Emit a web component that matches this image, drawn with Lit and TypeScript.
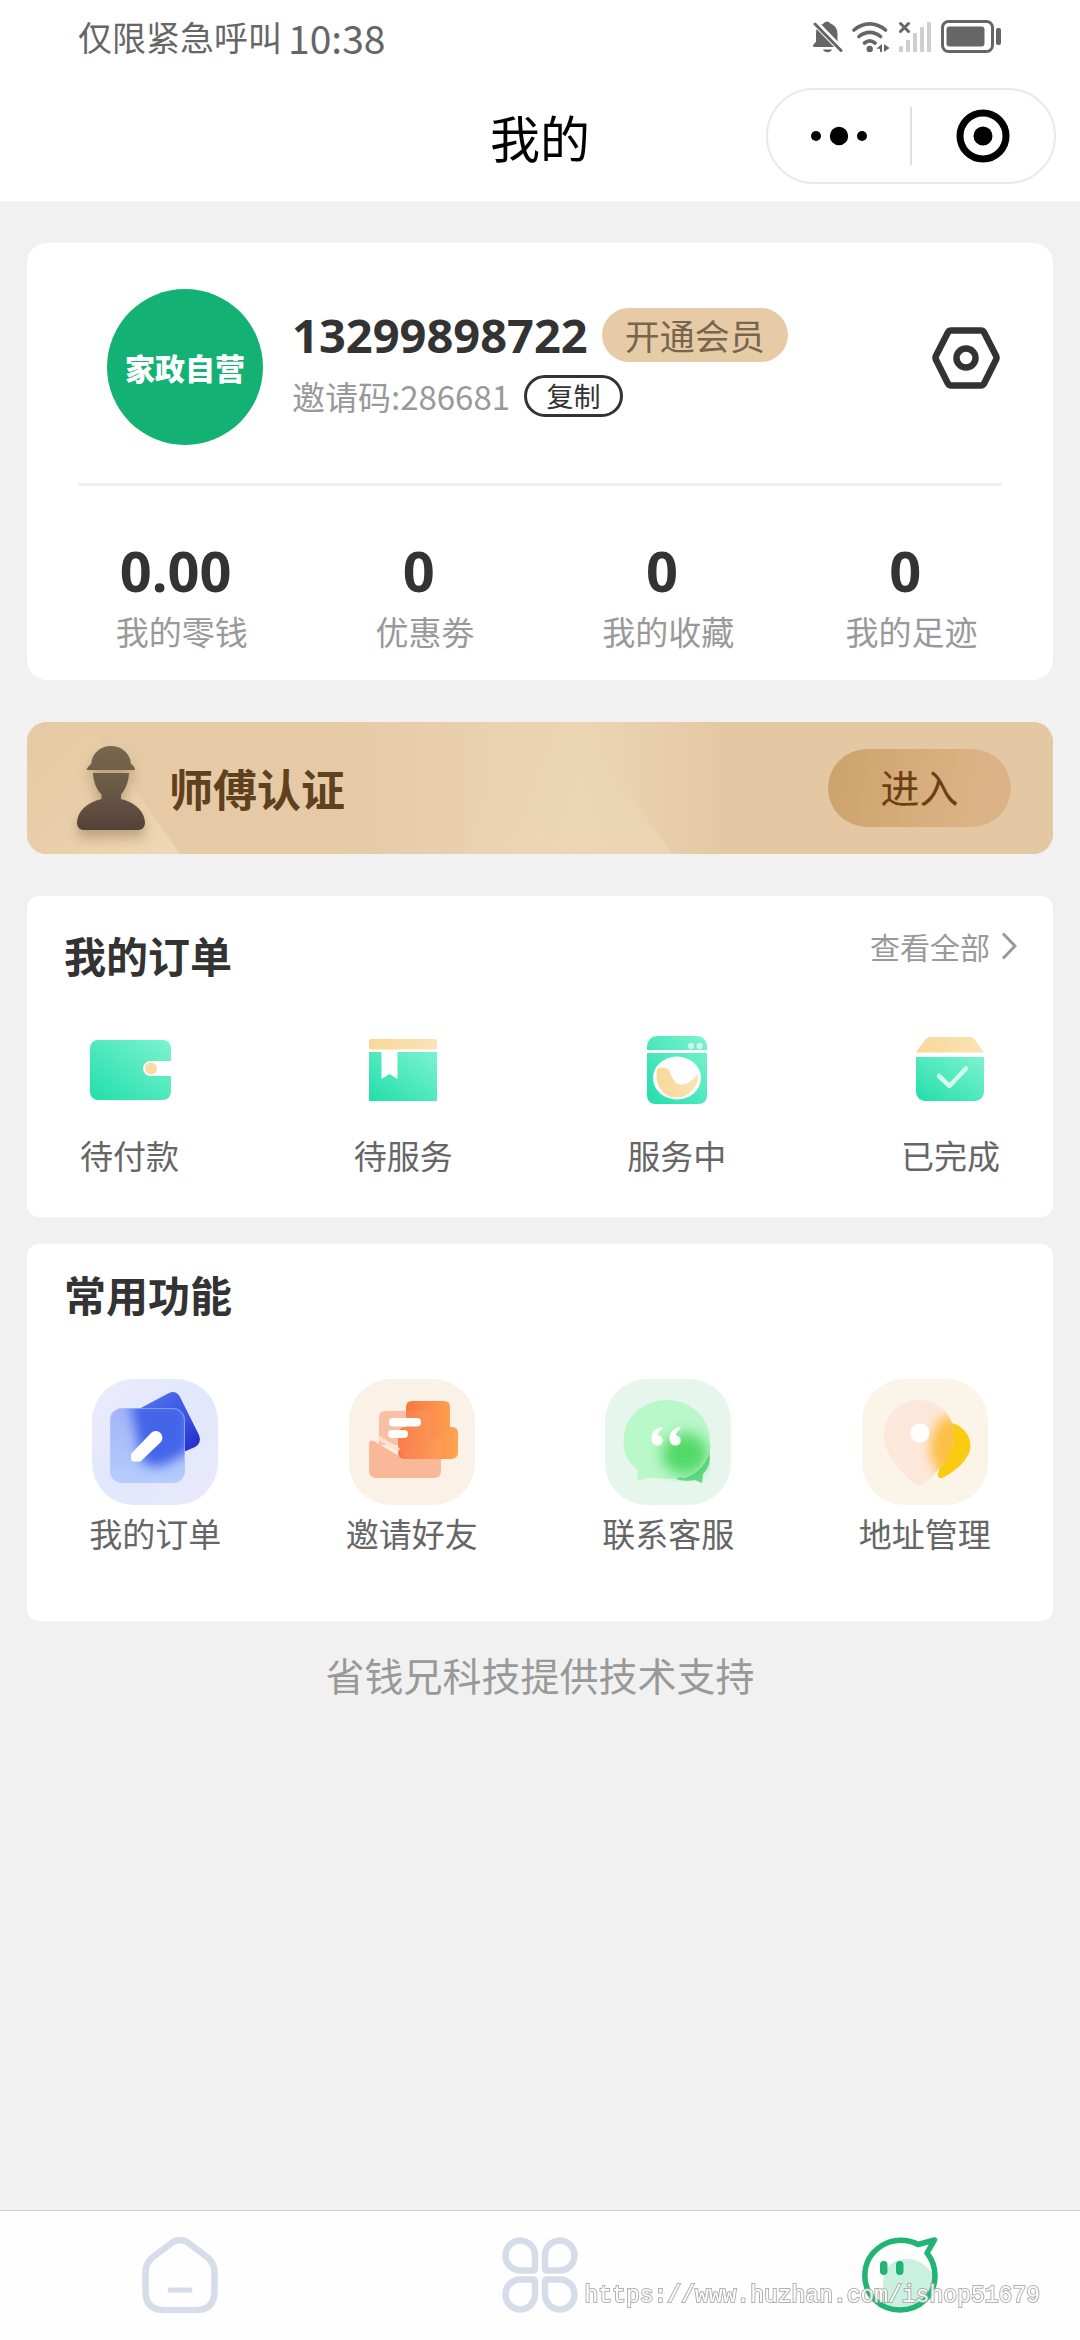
import { LitElement, html, css, svg } from "lit";
import { customElement } from "lit/decorators.js";

const bellIcon = html`<svg width="30" height="32" viewBox="0 0 30 32" aria-hidden="true">
  <path fill="#666" d="M14 .8c1.700 0 2.800.6 3.400 1.600C22 4 24.500 8 24.500 13v7l2.500 3.500V26H.5v-2.200L3 21V13c0-5 3.200-9 7.600-10.600C11.200 1.400 12.300.8 14 .8zM10 28.500h9c-.6 1.800-2.300 2.800-4.500 2.800s-3.900-1-4.500-2.800z"/>
  <path stroke="#fff" stroke-width="7" d="M0 0l30 31"/>
  <path fill="#666" d="M3.500 8L21 26H.5v-2.200L3 21z"/>
  <path stroke="#666" stroke-width="3" stroke-linecap="round" d="M2 3l26 26.500"/>
</svg>`;

const wifiIcon = html`<svg width="38" height="32" viewBox="0 0 38 32" fill="none" stroke="#666" stroke-width="3.600" stroke-linecap="round" aria-hidden="true">
  <path d="M2 9c9.500-8.200 22-8.200 31.500 0M7 15.500c6.500-5.500 15-5.500 21.500 0M12.500 22c3.200-2.600 7.300-2.600 10.500 0"/>
  <circle cx="17.700" cy="28" r="3.200" fill="#666" stroke="none"/>
  <path fill="#666" stroke="none" d="M30 23v8h-2v-3l-3.500-.5zM32 23l5.500 4-5.500 4z"/>
</svg>`;

const signalIcon = html`<svg width="33" height="32" viewBox="0 0 33 32" aria-hidden="true">
  <path stroke="#666" stroke-width="3" stroke-linecap="round" d="M1.500 2.500l8 8M9.500 2.500l-8 8"/>
  <g fill="#cfcfcf"><rect y="25" width="4" height="6" rx="1"/><rect x="7" y="19" width="4" height="12" rx="1"/><rect x="14" y="12" width="4" height="19" rx="1"/><rect x="21" y="6" width="4" height="25" rx="1"/><rect x="28" y="1" width="4" height="30" rx="1"/></g>
</svg>`;

const batteryIcon = html`<svg width="61" height="34" viewBox="0 0 61 34" aria-hidden="true">
  <rect x="1.500" y="1.500" width="50" height="30" rx="6" fill="none" stroke="#666" stroke-width="3"/>
  <rect x="5.500" y="6.500" width="38" height="20" rx="3" fill="#666"/>
  <rect x="55" y="8" width="5" height="17" rx="2" fill="#666"/>
</svg>`;

const moreIcon = html`<svg width="58" height="20" viewBox="0 0 58 20" aria-hidden="true">
  <circle cx="6" cy="10" r="5"/><circle cx="29" cy="10" r="9.200"/><circle cx="52" cy="10" r="5"/>
</svg>`;

const targetIcon = html`<svg width="54" height="54" viewBox="0 0 54 54" aria-hidden="true">
  <circle cx="27" cy="27" r="23" fill="none" stroke="#000" stroke-width="7"/><circle cx="27" cy="27" r="9.500"/>
</svg>`;

const settingsIcon = html`<svg width="68" height="62" viewBox="0 0 68 62" fill="none" stroke="#333" stroke-width="6.500" stroke-linejoin="round" aria-hidden="true">
  <path d="M19 3.500h30q2 0 3 1.800l12 23.500q1 2 0 4L52 56.700q-1 1.800-3 1.800H19q-2 0-3-1.800L4 32.800q-1-2 0-4L16 5.300q1-1.800 3-1.800z"/>
  <circle cx="34" cy="31" r="9.500"/>
</svg>`;

const workerIcon = html`<svg class="worker" width="68" height="84" viewBox="0 0 68 84" aria-hidden="true">
  <defs><linearGradient id="wk" x1="0" y1="0" x2="0" y2="1"><stop offset="0" stop-color="#78674f"/><stop offset=".55" stop-color="#695745"/><stop offset="1" stop-color="#56413a"/></linearGradient></defs>
  <path fill="url(#wk)" d="M9.500 24c1-3 2.500-4.500 4.700-6C15 7 23.500 0 34 0s19 7 20 18c2.200 1 3.500 3 4 6zM16 27h36c-.5 9-3 15.500-8 21.500v4.500c14 3.500 23.500 12 24 23.500 0 5-3 7.500-7 7.500H7c-4 0-7-2.500-7-7.500C.5 65 10 56.500 24.500 53v-4.500C19 42.500 16.500 36 16 27z"/>
</svg>`;

const bannerArt = html`<svg class="banner-art" viewBox="0 0 1026 132" preserveAspectRatio="none" aria-hidden="true">
  <defs>
    <linearGradient id="b0"><stop offset="0" stop-color="#e6caa6"/><stop offset=".3" stop-color="#e6caa6"/><stop offset=".54" stop-color="#ecd5b4"/><stop offset=".68" stop-color="#e4c8a3"/><stop offset="1" stop-color="#e4c8a3"/></linearGradient>
    <linearGradient id="b1" x1="0" y1="0" x2="1" y2="1"><stop offset="0" stop-color="#e5c9a0" stop-opacity=".4"/><stop offset="1" stop-color="#efd9b4"/></linearGradient>
    <linearGradient id="b2" x1="0" y1="0" x2="1" y2="1"><stop offset=".3" stop-color="#eed8b8" stop-opacity="0"/><stop offset="1" stop-color="#eed8b8" stop-opacity=".7"/></linearGradient>
  </defs>
  <rect width="1026" height="132" fill="url(#b0)"/>
  <path fill="url(#b1)" d="M0 0h60l93 132H0z"/>
  <path fill="url(#b2)" d="M440 0h112l93 132H440z"/>
</svg>`;

const chevronIcon = html`<svg width="16" height="28" viewBox="0 0 16 28" fill="none" stroke="#999" stroke-width="3" aria-hidden="true"><path d="M2 1.500L14 14 2 26.500"/></svg>`;

const mint = (id: string) => svg`<linearGradient id=${id} x1="0" y1="1" x2="1" y2="0"><stop offset="0" stop-color="#22deaa"/><stop offset="1" stop-color="#7df3d0"/></linearGradient>`;
const sand = (id: string) => svg`<linearGradient id=${id} x1="0" y1="0" x2="1" y2="0"><stop offset="0" stop-color="#f8d898"/><stop offset="1" stop-color="#fae3b6"/></linearGradient>`;

const orderItems = [
  {
    label: "待付款",
    art: svg`<defs>${mint("o1")}</defs>
      <path fill="url(#o1)" d="M16 18h65a8 8 0 0 1 8 8v13H68.500a7.500 7.500 0 0 0 0 15H89v16a8 8 0 0 1-8 8H16a8 8 0 0 1-8-8V26a8 8 0 0 1 8-8z"/>
      <circle cx="69" cy="46.500" r="6" fill="#fbdba4"/>`,
  },
  {
    label: "待服务",
    art: svg`<defs>${mint("o2")}${sand("s2")}</defs>
      <rect x="14" y="17" width="68" height="10.500" rx="2" fill="url(#s2)"/>
      <path fill="url(#o2)" d="M14 30h12.500v27l8-5 8 5V30H82v49H14z"/>`,
  },
  {
    label: "服务中",
    art: svg`<defs>${mint("o3")}${sand("s3")}</defs>
      <path fill="url(#o3)" d="M28 14h40a10 10 0 0 1 10 10v4H18v-4a10 10 0 0 1 10-10zM18 31h60v43a8 8 0 0 1-8 8H26a8 8 0 0 1-8-8z"/>
      <circle cx="62" cy="24" r="3" fill="#d5faec"/><circle cx="70.500" cy="24" r="3" fill="#d5faec"/>
      <ellipse cx="48" cy="56" rx="24" ry="21.500" fill="#fff"/>
      <path fill="url(#s3)" d="M28 47c4-2 9-2 12 1 2 5 4 11 9 14 8 2 14-3 20-10 1 12-8 23-21 23.500S25 64 28 47z"/>`,
  },
  {
    label: "已完成",
    art: svg`<defs>${mint("o4")}${sand("s4")}</defs>
      <path fill="url(#s4)" d="M28 15h40q3 0 5 3l9 12.500H14L23 18q2-3 5-3z"/>
      <path fill="url(#o4)" d="M14 35h68v35a9 9 0 0 1-9 9H23a9 9 0 0 1-9-9z"/>
      <path fill="none" stroke="#d3faec" stroke-width="4.500" stroke-linecap="round" stroke-linejoin="round" d="M37 54l10.500 10L64 46.500"/>`,
  },
];

const toolItems = [
  {
    label: "我的订单",
    art: svg`<defs>
        <linearGradient id="t1a" x1="0" y1="0" x2="1" y2="1"><stop offset="0" stop-color="#ecebfa"/><stop offset=".5" stop-color="#e1e7fd"/><stop offset="1" stop-color="#ebe9fb"/></linearGradient>
        <linearGradient id="t1b" x1="0" y1="0" x2="1" y2="1"><stop offset="0" stop-color="#5578f2"/><stop offset=".6" stop-color="#3a52e0"/><stop offset="1" stop-color="#1d1fc0"/></linearGradient>
        <linearGradient id="t1c" x1="0" y1="0" x2="0" y2="1"><stop offset="0" stop-color="#a2b4f8"/><stop offset="1" stop-color="#b5cdfc"/></linearGradient>
        <clipPath id="t1d"><rect x="18" y="29" width="75" height="75" rx="12"/></clipPath>
        <filter id="t1e" x="-50%" y="-50%" width="200%" height="200%"><feGaussianBlur stdDeviation="6"/></filter>
      </defs>
      <rect width="126" height="126" rx="42" fill="url(#t1a)"/>
      <path fill="url(#t1b)" d="M45 31l32-17q7-3 11 4l19 38q3 8-4 12L80 78 50 70z"/>
      <rect x="18" y="29" width="75" height="75" rx="12" fill="url(#t1c)"/>
      <g clip-path="url(#t1d)"><path filter="url(#t1e)" fill="#4265ea" d="M38 22h60v50L68 88 50 84z"/></g>
      <rect x="18.500" y="29.500" width="74" height="74" rx="12" fill="none" stroke="#b9c9ff" stroke-opacity=".5"/>
      <path fill="#fff" d="M39 75l20-21a6.500 6.500 0 0 1 9.500 9.500L50 81q-1 1.500-3 1.500h-5q-3 0-3-3z"/>`,
  },
  {
    label: "邀请好友",
    art: svg`<defs><linearGradient id="t2" x1="0" y1="0" x2="1" y2="0"><stop offset="0" stop-color="#f8713c"/><stop offset="1" stop-color="#ffa553"/></linearGradient></defs>
      <rect width="126" height="126" rx="42" fill="#faf1e7"/>
      <path fill="#fac0a4" d="M36 32h41q6 0 6 6v28H30V38q0-6 6-6z"/>
      <path fill="#f9b898" d="M20 65q0-5 5-3l25 15 32-17q10-4 10 4v28q0 7-7 7H27q-7 0-7-7z"/>
      <path fill="url(#t2)" d="M63 22h32q6 0 6 6v20h2q6 0 6 6v19q0 7-7 7H56q-7 0-7-7V55q0-7 8-7V28q0-6 6-6z"/>
      <path fill="#ffb78e" fill-opacity=".18" d="M57 32h20q6 0 6 6v22l9-1v21H56l-7-7V55q0-7 8-7z"/>
      <path fill="none" stroke="#fb8d5a" stroke-width="2" d="M56 76l28-16M77 32q6 0 6 7v20"/>
      <path fill="none" stroke="#fce0d2" stroke-width="4" d="M30 59l20 12"/>
      <rect x="40" y="39" width="32" height="8.500" rx="4" fill="#fff"/><rect x="39" y="51" width="20" height="8" rx="4" fill="#fff"/>`,
  },
  {
    label: "联系客服",
    art: svg`<defs>
        <filter id="t3f" x="-50%" y="-50%" width="200%" height="200%"><feGaussianBlur stdDeviation="7"/></filter>
        <clipPath id="t3c"><path d="M61.500 21a42.500 40 0 0 1 43.500 40v42H18V61a42.500 40 0 0 1 43.500-40z"/></clipPath>
      </defs>
      <rect width="126" height="126" rx="42" fill="#e7f6ed"/>
      <path fill="#66d88a" d="M104 72q3 14-6 23l-1 9-7-3q-10 2-19-1z"/>
      <path fill="#b9f8c9" d="M61.500 21a42.500 40 0 0 1 43.500 40c0 23-19 39-41 39-9 0-15-2-21-1l-11 3 1-11C22 83 18.500 73 18.500 61a42.500 40 0 0 1 43-40z"/>
      <g clip-path="url(#t3c)"><ellipse cx="80" cy="75" rx="23" ry="21" fill="#3fd457" filter="url(#t3f)" opacity=".85"/></g>
      <path fill="none" stroke="#9aecab" stroke-width="1.500" d="M105 66c-1 17-14 29-28 33"/>
      <path fill="#fff" d="M57 48c-7 1-11 6-10.500 12 .3 4 2.500 6.500 6 6.500 3 0 5.200-2 5.200-5s-2-5-5-5c.3-3 2-5 4.800-6.300zM75 48c-7 1-11 6-10.500 12 .3 4 2.500 6.500 6 6.500 3 0 5.200-2 5.200-5s-2-5-5-5c.3-3 2-5 4.800-6.300z"/>`,
  },
  {
    label: "地址管理",
    art: svg`<defs>
        <clipPath id="t4c"><path d="M57 21c20 0 35 15 35 35 0 19-13 33-28 47q-7 6-14 0C36 89 22 75 22 56c0-20 15-35 35-35z"/></clipPath>
        <filter id="t4f" x="-50%" y="-50%" width="200%" height="200%"><feGaussianBlur stdDeviation="6"/></filter>
      </defs>
      <rect width="126" height="126" rx="42" fill="#fbf5e9"/>
      <path fill="#fbca12" d="M90 44c11 3 19 13 18.500 24C107 81 94 92 80 99q-4 1-4-4z"/>
      <path fill="#fde7db" d="M57 21c20 0 35 15 35 35 0 19-13 33-28 47q-7 6-14 0C36 89 22 75 22 56c0-20 15-35 35-35z"/>
      <g clip-path="url(#t4c)"><path filter="url(#t4f)" fill="#fdbb33" fill-opacity=".9" d="M80 38h30v60H78L68 76q-2-20 12-38z"/></g>
      <circle cx="58" cy="54" r="9.500" fill="#fff"/>`,
  },
];

const stats = [
  { value: "0.00", label: "我的零钱" },
  { value: "0", label: "优惠劵" },
  { value: "0", label: "我的收藏" },
  { value: "0", label: "我的足迹" },
];

const leaf = "M18.500 3.500A15 15 0 0 1 33 18.500V31q0 2.500-2.500 2.500H18.500A15 15 0 0 1 18.500 3.500z";
const tabs = [
  {
    name: "首页",
    art: svg`<g fill="none" stroke="#d6dce9" stroke-width="6.500" stroke-linecap="round"><path d="M31 5q7-4 14 0l20 15q7.500 6 7.500 15v19q0 18-17 19-18 .6-35 0Q3.500 72 3.500 54V35q0-9 7.500-15z"/><path stroke-width="5" d="M28 53h20"/></g>`,
  },
  {
    name: "分类",
    art: svg`<g fill="none" stroke="#d6dce9" stroke-width="6.500"><path d=${leaf}/><path d=${leaf} transform="translate(76 0) scale(-1 1)"/><path d=${leaf} transform="translate(0 76) scale(1 -1)"/><path d=${leaf} transform="translate(76 76) scale(-1 -1)"/></g>`,
  },
  {
    name: "我的",
    art: svg`<defs><clipPath id="fc"><circle cx="38" cy="39" r="34"/></clipPath></defs>
      <path clip-path="url(#fc)" fill="#caf0df" d="M21 76V44q2-22 25-22 18 1 27 20v34z"/>
      <path fill="none" stroke="#21b473" stroke-width="5.500" stroke-linejoin="round" d="M65 16l7.500-13L56 7.500C45 1.500 31 2 20 8.500 8 16 2.800 27 2.800 39 3 58 18 73 38 73s35-15 35-34c0-9-3-17-8-23z"/>
      <rect x="18" y="24" width="7.500" height="14" rx="3.700" fill="#21b473"/><rect x="34" y="24" width="7.500" height="14" rx="3.700" fill="#21b473"/>`,
  },
];

@customElement("app-root")
export class AppRoot extends LitElement {
  static styles = css`
    :host {
      display: flex;
      flex-direction: column;
      min-height: 100vh;
      background: #f1f1f1;
      color: #333;
      font-family: "Noto Sans CJK SC", "Noto Sans", sans-serif;
      font-size: 33px;
      line-height: 48px;
    }
    * { box-sizing: border-box; }
    svg { display: block; flex: none; }
    h1, h2, p { margin: 0; }
    a { color: inherit; text-decoration: none; }
    button { margin: 0; padding: 0; border: 0; background: none; color: inherit; font: inherit; cursor: pointer; }
    .top { background: #fff; }
    .status {
      display: flex;
      align-items: center;
      justify-content: space-between;
      height: 74px;
      padding: 0 78px;
      color: #666;
      font-size: 34px;
    }
    .status-left { display: flex; align-items: center; gap: 6px; }
    .clock { font-size: 39px; }
    .status-right { display: flex; align-items: center; gap: 9px; }
    .nav {
      display: grid;
      grid-template-columns: 1fr auto 1fr;
      align-items: center;
      padding: 14px 24px 17px;
    }
    .title { grid-column: 2; color: #000; font-size: 50px; font-weight: 400; line-height: 64px; }
    .capsule {
      display: flex;
      align-items: center;
      justify-self: end;
      width: 290px;
      height: 96px;
      border: 2px solid #e9e9e9;
      border-radius: 48px;
    }
    .capsule button { flex: 1; display: grid; place-items: center; height: 58px; }
    .capsule button + button { border-left: 2px solid #e0e0e0; }
    main { padding: 42px 27px 0; }
    .card { background: #fff; border-radius: 12px; }
    .account { border-radius: 20px; padding: 46px 0 24px; }
    .profile { display: flex; align-items: center; padding: 0 53px 0 80px; }
    .avatar {
      display: grid;
      place-items: center;
      width: 156px;
      height: 156px;
      border-radius: 50%;
      background: #13b174;
      color: #fff;
      font-size: 30px;
      font-weight: 900;
    }
    .info { flex: 1; display: grid; gap: 13px; padding: 0 0 9px 29px; }
    .line { display: flex; align-items: center; gap: 14px; }
    .phone { font-family: "Noto Sans", sans-serif; font-size: 47px; font-weight: 700; }
    .vip { height: 54px; padding: 0 23px; border-radius: 27px; background: #e7cba7; color: #77654f; font-size: 35px; }
    .invite { height: 42px; color: #999; }
    .copy { display: grid; place-items: center; width: 99px; height: 42px; border: 3px solid #333; border-radius: 21px; color: #333; font-size: 27px; line-height: 36px; }
    .settings { padding-bottom: 18px; }
    .rule { height: 3px; margin: 38px 51px 0; border: 0; background: #efefef; }
    .stats { display: grid; grid-template-columns: repeat(4, 1fr); padding: 52px 20px 0 33px; text-align: center; }
    .stats a { display: grid; gap: 5px; }
    .stats strong { padding-right: 12px; font-family: "Noto Sans", sans-serif; font-size: 56px; line-height: 64px; }
    .stats span { color: #999; }
    .account { padding-bottom: 25px; }
    .banner {
      position: relative;
      display: flex;
      align-items: center;
      overflow: hidden;
      height: 132px;
      margin: 42px 0;
      padding: 0 42px 0 50px;
      border-radius: 20px;
      background: #e6caa6;
    }
    .banner-art { position: absolute; inset: 0; width: 100%; height: 100%; }
    .banner > * { z-index: 1; }
    .banner > .banner-art { z-index: 0; }
    .worker { filter: drop-shadow(0 8px 6px rgba(110, 80, 40, 0.35)); }
    .banner h2 { flex: 1; padding-left: 24px; color: #5f411f; font-size: 44px; }
    .enter {
      width: 183px;
      height: 78px;
      padding-bottom: 4px;
      border-radius: 39px;
      background: linear-gradient(100deg, #cba26b, #dbb183 70%, #dcb488);
      color: #6c3f12;
      font-size: 39px;
    }
    .head { display: flex; justify-content: space-between; align-items: flex-start; padding: 26px 36px 0 37px; }
    .head h2 { font-size: 42px; }
    .orders .head h2 { padding-top: 9px; }
    .all { display: flex; align-items: center; gap: 11px; color: #999; font-size: 30px; }
    .order-list { display: flex; justify-content: space-between; padding: 43px 53px 38px; color: #666; }
    .order-list a { display: grid; justify-items: center; gap: 13px; }
    .tools { margin-top: 27px; }
    .tool-list { display: grid; grid-template-columns: repeat(4, 1fr); padding: 61px 0 64px; color: #666; }
    .tool-list a { display: grid; justify-items: center; gap: 4px; }
    .support { margin-top: 29px; color: #999; font-size: 39px; text-align: center; }
    .tabbar {
      position: relative;
      display: grid;
      grid-template-columns: repeat(3, 1fr);
      justify-items: center;
      margin-top: auto;
      padding: 26px 0 27px;
      border-top: 1px solid #ccc;
      background: #fefefe;
    }
    .mark {
      position: absolute;
      right: 40px;
      bottom: 26px;
      color: #fff;
      font-family: "Liberation Mono", monospace;
      font-size: 23px;
      line-height: 36px;
      -webkit-text-stroke: 2px #a4a4a4;
      paint-order: stroke fill;
      opacity: 0.85;
      pointer-events: none;
    }
  `;

  render() {
    return html`
      <header class="top">
        <div class="status">
          <div class="status-left"><span>仅限紧急呼叫</span><span class="clock">10:38</span></div>
          <div class="status-right">${bellIcon}${wifiIcon}${signalIcon}${batteryIcon}</div>
        </div>
        <div class="nav">
          <h1 class="title">我的</h1>
          <div class="capsule">
            <button aria-label="更多">${moreIcon}</button>
            <button aria-label="关闭">${targetIcon}</button>
          </div>
        </div>
      </header>
      <main>
        <section class="card account">
          <div class="profile">
            <div class="avatar">家政自营</div>
            <div class="info">
              <div class="line"><span class="phone">13299898722</span><button class="vip">开通会员</button></div>
              <div class="line invite"><span>邀请码:286681</span><button class="copy">复制</button></div>
            </div>
            <button class="settings" aria-label="设置">${settingsIcon}</button>
          </div>
          <hr class="rule" />
          <div class="stats">
            ${stats.map((s) => html`<a href="#"><strong>${s.value}</strong><span>${s.label}</span></a>`)}
          </div>
        </section>
        <section class="banner">
          ${bannerArt}${workerIcon}
          <h2>师傅认证</h2>
          <button class="enter">进入</button>
        </section>
        <section class="card orders">
          <div class="head"><h2>我的订单</h2><a class="all" href="#">查看全部${chevronIcon}</a></div>
          <div class="order-list">
            ${orderItems.map((o) => html`<a href="#"><svg width="96" height="96" viewBox="0 0 96 96" aria-hidden="true">${o.art}</svg><span>${o.label}</span></a>`)}
          </div>
        </section>
        <section class="card tools">
          <div class="head"><h2>常用功能</h2></div>
          <div class="tool-list">
            ${toolItems.map((t) => html`<a href="#"><svg width="126" height="126" viewBox="0 0 126 126" aria-hidden="true">${t.art}</svg><span>${t.label}</span></a>`)}
          </div>
        </section>
        <p class="support">省钱兄科技提供技术支持</p>
      </main>
      <nav class="tabbar">
        ${tabs.map((t) => html`<a href="#" aria-label=${t.name}><svg width="76" height="76" viewBox="0 0 76 76" aria-hidden="true">${t.art}</svg></a>`)}
        <span class="mark">https://www.huzhan.com/ishop51679</span>
      </nav>
    `;
  }
}
